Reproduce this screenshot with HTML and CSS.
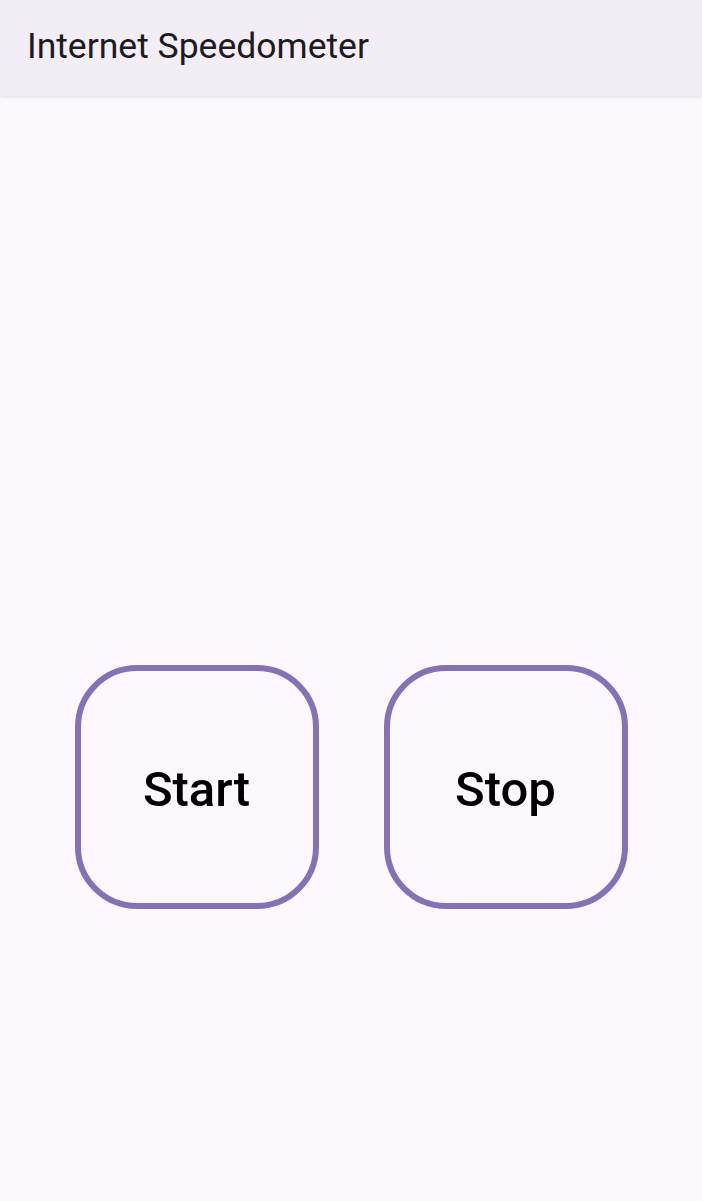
FILE: index.html
```html
<!DOCTYPE html>
<html>
<head>
<meta charset="utf-8">
<link rel="stylesheet" href="styles.css">
</head>
<body>
<header class="app-bar">
  <h1 class="title">Internet Speedometer</h1>
</header>
<main class="content">
  <div class="buttons">
    <button class="btn">Start</button>
    <button class="btn">Stop</button>
  </div>
</main>
</body>
</html>
```

FILE: styles.css
```css
html, body {
  margin: 0;
  padding: 0;
  height: 100%;
}
body {
  background: #fdf7fe;
  font-family: Roboto, "Noto Sans", sans-serif;
  overflow: hidden;
}
.app-bar {
  height: 96px;
  background: #f3eef6;
  box-shadow: 0 1px 3px rgba(0,0,0,0.12);
  display: flex;
  align-items: center;
  padding-left: 27px;
  position: relative;
}
.title {
  margin: 0;
  font-size: 35.5px;
  font-weight: 400;
  color: #1d1b20;
  line-height: 1;
  padding-bottom: 2px;
}
.content {
  padding-top: 569px;
}
.buttons {
  display: flex;
  justify-content: center;
  gap: 65px;
}
.btn {
  width: 244px;
  height: 244px;
  box-sizing: border-box;
  border: 6px solid #8572b5;
  border-radius: 62px;
  background: transparent;
  font-family: Roboto, "Noto Sans", sans-serif;
  font-size: 49px;
  font-weight: 500;
  color: #000;
  padding: 4px 0 0 0;
}
```
